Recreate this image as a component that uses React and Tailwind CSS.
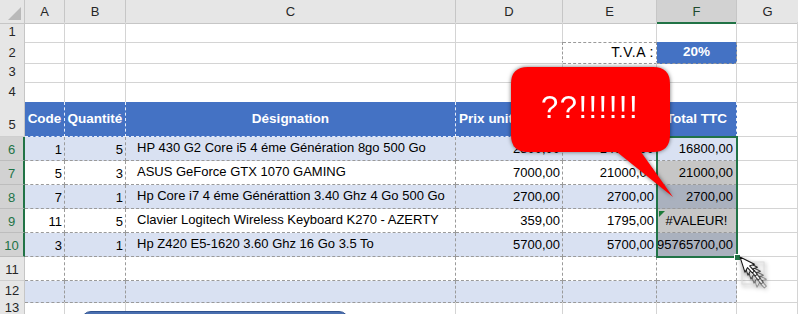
import React from 'react';

const COLS = 'grid grid-cols-[25px_40px_61px_330px_107px_94px_80px_61px]';
const GRID = 'border-r border-b border-r-[#d4d4d4] border-b-[#d4d4d4]';
const DASH = 'border-r border-b border-dashed border-r-[#9a9a9a] border-b-[#9a9a9a]';
const RH = 'bg-[#e6e6e6] border-r border-b border-r-[#c6c6c6] border-b-[#cfcfcf] flex items-center justify-center text-[13px] text-[#262626]';
const RHSEL = 'bg-[#d2d2d2] border-r-2 border-b border-r-[#217346] border-b-[#bdbdbd] flex items-end justify-center pb-[1px] text-[13px] text-[#217346]';

const data = [
  ['1', '5', 'HP 430 G2 Core i5 4 éme Génération 8go 500 Go', '2800,00', '14000,00', '16800,00'],
  ['5', '3', 'ASUS GeForce GTX 1070 GAMING', '7000,00', '21000,00', '21000,00'],
  ['7', '1', 'Hp Core i7 4 éme Générattion 3.40 Ghz 4 Go 500 Go', '2700,00', '2700,00', '2700,00'],
  ['11', '5', 'Clavier Logitech Wireless Keyboard K270 - AZERTY', '359,00', '1795,00', '#VALEUR!'],
  ['3', '1', 'Hp Z420 E5-1620 3.60 Ghz 16 Go 3.5 To', '5700,00', '5700,00', '95765700,00'],
];

const fBg = ['bg-[#d9e1f2]', 'bg-[#c6c6c6]', 'bg-[#aab1be]', 'bg-[#c6c6c6]', 'bg-[#aab1be]'];

function Arrow({ dx, dy, op }) {
  return (
    <g transform={`translate(${dx} ${dy}) rotate(-18 6 5)`} opacity={op}>
      <path d="M6 5 L6 21 L9.8 17.4 L12.8 24 L15.3 22.9 L12.4 16.4 L17.5 16.4 Z" fill="#ffffff" stroke="#111111" strokeWidth="1" strokeLinejoin="round" />
    </g>
  );
}

export default function App() {
  return (
    <div className="relative w-[798px] h-[314px] overflow-hidden bg-white font-['Liberation_Sans',Arial,sans-serif] text-black">
      {/* column header row */}
      <div className={`${COLS} h-[22px]`}>
        <div className="relative bg-[#e6e6e6] border-r border-b border-r-[#c6c6c6] border-b-[#c6c6c6]">
          <div className="absolute right-[3px] bottom-[3px] w-0 h-0 border-l-[13px] border-l-transparent border-b-[13px] border-b-[#b9b9b9]" />
        </div>
        {['A', 'B', 'C', 'D', 'E'].map((l) => (
          <div key={l} className="bg-[#e6e6e6] border-r border-b border-r-[#c6c6c6] border-b-[#c6c6c6] flex items-center justify-center text-[13px] text-[#262626] pt-[1px]">{l}</div>
        ))}
        <div className="bg-[#d2d2d2] border-r border-b-2 border-r-[#c6c6c6] border-b-[#217346] flex items-center justify-center text-[13px] text-[#1f4a2e] pt-[2px]">F</div>
        <div className="bg-[#e6e6e6] border-b border-b-[#c6c6c6] flex items-center justify-center text-[13px] text-[#262626] pt-[1px]">G</div>
      </div>

      {/* rows 1-4 */}
      {[1, 2, 3, 4].map((r) => (
        <div key={r} className={`${COLS} h-[20px]`}>
          <div className={RH}>{r}</div>
          {['A', 'B', 'C', 'D', 'E', 'F', 'G'].map((c) => {
            let cls = GRID;
            if (r === 4 && c !== 'G') cls = 'border-r border-b border-r-[#d4d4d4] border-b-[#9a9a9a] [border-bottom-style:dashed]';
            if (r === 1 && (c === 'E' || c === 'F')) cls = 'border-r border-b border-r-[#d4d4d4] border-b-[#9a9a9a] [border-bottom-style:dashed]';
            if (r === 2 && c === 'D') cls = 'border-r border-b border-r-[#9a9a9a] border-b-[#d4d4d4] [border-right-style:dashed]';
            if (r === 2 && c === 'E')
              return (
                <div key={c} className={`${DASH} flex items-center justify-end pr-[2px] text-[14px] tracking-[0.5px]`}>T.V.A :</div>
              );
            if (r === 2 && c === 'F')
              return (
                <div key={c} className={`${DASH} bg-[#4472c4] flex items-center justify-center text-[13.5px] font-bold text-white`}>20%</div>
              );
            return <div key={c} className={cls} />;
          })}
        </div>
      ))}

      {/* row 5 header */}
      <div className={`${COLS} h-[35px]`}>
        <div className="bg-[#e6e6e6] border-r border-b border-r-[#c6c6c6] border-b-[#cfcfcf] flex items-end justify-center pb-[2px] text-[13px] text-[#262626]">5</div>
        {['Code', 'Quantité', 'Désignation', 'Prix unitaire HT', 'Total HT', 'Total TTC'].map((t) => (
          <div key={t} className="bg-[#4472c4] border-r border-b border-dashed border-r-[#e8eefa] border-b-[#e8eefa] flex items-center justify-center text-[13.5px] font-bold text-white whitespace-nowrap overflow-hidden">{t}</div>
        ))}
        <div className={GRID} />
      </div>

      {/* data rows */}
      {data.map((row, i) => {
        const band = i % 2 === 0 ? 'bg-[#d9e1f2]' : 'bg-white';
        return (
          <div key={i} className={`${COLS} h-[24px]`}>
            <div className={RHSEL}>{6 + i}</div>
            <div className={`${DASH} ${band} flex items-end justify-end pr-[2px] pb-[1px] text-[13px]`}>{row[0]}</div>
            <div className={`${DASH} ${band} flex items-end justify-end pr-[2px] pb-[1px] text-[13px]`}>{row[1]}</div>
            <div className={`${DASH} ${band} flex items-center pl-[11px] pb-[2px] text-[13px] whitespace-nowrap overflow-hidden`}>{row[2]}</div>
            <div className={`${DASH} ${band} flex items-end justify-end pr-[2px] pb-[2px] text-[13px]`}>{row[3]}</div>
            <div className={`${DASH} ${band} flex items-end justify-end pr-[2px] pb-[2px] text-[13px]`}>{row[4]}</div>
            <div className={`${DASH} ${fBg[i]} relative flex items-end ${row[5] === '#VALEUR!' ? 'justify-center' : 'justify-end pr-[3px]'} pb-[2px] text-[13px]`}>
              {row[5] === '#VALEUR!' && (
                <div className="absolute left-[2px] top-[2px] w-0 h-0 border-t-[6px] border-t-[#1e7b3a] border-r-[6px] border-r-transparent" />
              )}
              {row[5]}
            </div>
            <div className={GRID} />
          </div>
        );
      })}

      {/* rows 11-12 */}
      {[11, 12].map((r) => {
        const band = r === 12 ? 'bg-[#d9e1f2]' : 'bg-white';
        return (
          <div key={r} className={`${COLS} ${r === 11 ? 'h-[24px]' : 'h-[21px]'}`}>
            <div className={`${RH} items-end pb-[1px]`}>{r}</div>
            {['A', 'B', 'C', 'D', 'E', 'F'].map((c) => (
              <div key={c} className={`${DASH} ${band}`} />
            ))}
            <div className={GRID} />
          </div>
        );
      })}

      {/* row 13 */}
      <div className={`${COLS} h-[20px]`}>
        <div className={`${RH} items-start leading-[12px]`}>13</div>
        {['A', 'B', 'C', 'D', 'E', 'F', 'G'].map((c) => (
          <div key={c} className={GRID} />
        ))}
      </div>

      {/* selection border F6:F10 */}
      <div className="absolute left-[656px] top-[136px] w-[82px] h-[122px] border-2 border-[#217346] pointer-events-none" />
      <div className="absolute left-[734px] top-[254px] w-[7px] h-[7px] bg-[#217346] border border-white" />

      {/* bottom shape */}
      <div className="absolute left-[81px] top-[311px] w-[268px] h-[20px] rounded-t-[10px] bg-[#4a6fb0] border border-[#2f528f]" />

      {/* callout */}
      <svg className="absolute left-[500px] top-[55px] drop-shadow-[0_0_2px_rgba(0,0,0,0.55)]" width="185" height="150" viewBox="0 0 185 150">
        <path d="M28 12 H153 Q170 12 170 29 V80 Q170 97 153 97 H141 L173 142 L117 97 H28 Q11 97 11 80 V29 Q11 12 28 12 Z" fill="#ff0000" />
        <text x="90" y="63" textAnchor="middle" fill="#ffffff" fontSize="31" letterSpacing="1.5" fontFamily="Liberation Sans, Arial, sans-serif">??!!!!!!</text>
      </svg>

      {/* cursor */}
      <svg className="absolute left-[734px] top-[252px] drop-shadow-[1px_2px_2px_rgba(0,0,0,0.45)]" width="50" height="50" viewBox="0 0 50 50">
        <rect x="8" y="10" width="22" height="22" fill="none" stroke="#dcdcdc" strokeWidth="1" />
        <Arrow dx={12} dy={15} op={0.35} />
        <Arrow dx={9} dy={11} op={0.5} />
        <Arrow dx={6} dy={7} op={0.7} />
        <Arrow dx={3} dy={3} op={0.85} />
        <Arrow dx={0} dy={0} op={1} />
      </svg>
    </div>
  );
}
